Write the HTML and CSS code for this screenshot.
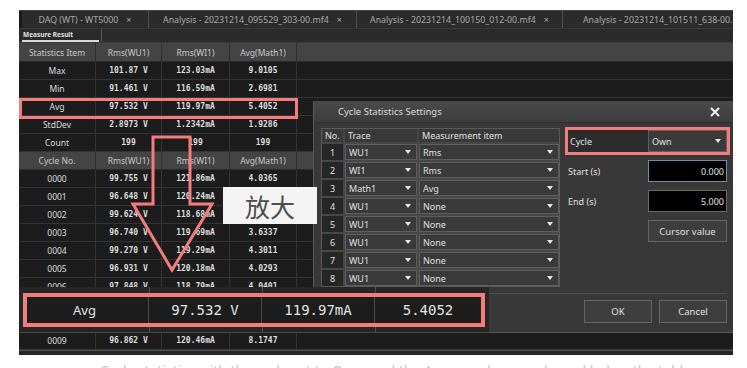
FILE: index.html
```html
<!DOCTYPE html>
<html lang="en">
<head>
    <meta charset="UTF-8">
    <title>Cycle Statistics Settings</title>
    <link rel="stylesheet" href="styles.css">
</head>
<body>
    <div class="app">
        <!-- document tabs -->
        <div class="tabs">
            <div class="tab t1">DAQ (WT) - WT5000 <span class="x">×</span></div>
            <div class="tab t2">Analysis - 20231214_095529_303-00.mf4 <span class="x">×</span></div>
            <div class="tab t3">Analysis - 20231214_100150_012-00.mf4 <span class="x">×</span></div>
            <div class="tab t4">Analysis - 20231214_101511_638-00.mf4 <span class="x">×</span></div>
        </div>

        <div class="subtabs">
            <div class="subtab">Measure Result</div>
        </div>

        <!-- result table -->
        <div class="grid">
            <div class="row head"><div>Statistics Item</div><div>Rms(WU1)</div><div>Rms(WI1)</div><div>Avg(Math1)</div><div></div></div>
            <div class="row"><div>Max</div><div class="num">101.87 V</div><div class="num">123.03mA</div><div class="num">9.0105</div><div></div></div>
            <div class="row"><div>Min</div><div class="num">91.461 V</div><div class="num">116.59mA</div><div class="num">2.6981</div><div></div></div>
            <div class="row"><div>Avg</div><div class="num">97.532 V</div><div class="num">119.97mA</div><div class="num">5.4052</div><div></div></div>
            <div class="row"><div>StdDev</div><div class="num">2.8973 V</div><div class="num">1.2342mA</div><div class="num">1.9286</div><div></div></div>
            <div class="row"><div>Count</div><div class="num">199</div><div class="num">199</div><div class="num">199</div><div></div></div>
            <div class="row head short"><div>Cycle No.</div><div>Rms(WU1)</div><div>Rms(WI1)</div><div>Avg(Math1)</div><div></div></div>
            <div class="row"><div>0000</div><div class="num">99.755 V</div><div class="num">121.86mA</div><div class="num">4.0365</div><div></div></div>
            <div class="row"><div>0001</div><div class="num">96.648 V</div><div class="num">120.24mA</div><div class="num">4.2217</div><div></div></div>
            <div class="row"><div>0002</div><div class="num">99.624 V</div><div class="num">118.68mA</div><div class="num">3.9874</div><div></div></div>
            <div class="row"><div>0003</div><div class="num">96.740 V</div><div class="num">119.69mA</div><div class="num">3.6337</div><div></div></div>
            <div class="row"><div>0004</div><div class="num">99.270 V</div><div class="num">119.29mA</div><div class="num">4.3011</div><div></div></div>
            <div class="row"><div>0005</div><div class="num">96.931 V</div><div class="num">120.18mA</div><div class="num">4.0293</div><div></div></div>
            <div class="row"><div>0006</div><div class="num">97.848 V</div><div class="num">118.79mA</div><div class="num">4.0401</div><div></div></div>
            <div class="row"><div>0007</div><div class="num">98.113 V</div><div class="num">119.52mA</div><div class="num">5.1206</div><div></div></div>
            <div class="row"><div>0008</div><div class="num">97.405 V</div><div class="num">120.07mA</div><div class="num">6.3318</div><div></div></div>
            <div class="row"><div>0009</div><div class="num">96.862 V</div><div class="num">120.46mA</div><div class="num">8.1747</div><div></div></div>
            <div class="grid-foot"></div>
        </div>

        <!-- dialog -->
        <div class="dialog">
            <div class="dlg-title">
                <span>Cycle Statistics Settings</span>
                <svg class="close" width="10" height="10" viewBox="0 0 10 10">
                    <path d="M1 1 L9 9 M9 1 L1 9" stroke="#f2f2f2" stroke-width="2"/>
                </svg>
            </div>
            <div class="dlg-body">
                <div class="trace-table">
                    <div class="th">No.</div><div class="th">Trace</div><div class="th">Measurement item</div>
                    <div class="no">1</div><div class="sel">WU1<span class="caret"></span></div><div class="sel">Rms<span class="caret"></span></div>
                    <div class="no">2</div><div class="sel">WI1<span class="caret"></span></div><div class="sel">Rms<span class="caret"></span></div>
                    <div class="no">3</div><div class="sel">Math1<span class="caret"></span></div><div class="sel">Avg<span class="caret"></span></div>
                    <div class="no">4</div><div class="sel">WU1<span class="caret"></span></div><div class="sel">None<span class="caret"></span></div>
                    <div class="no">5</div><div class="sel">WU1<span class="caret"></span></div><div class="sel">None<span class="caret"></span></div>
                    <div class="no">6</div><div class="sel">WU1<span class="caret"></span></div><div class="sel">None<span class="caret"></span></div>
                    <div class="no">7</div><div class="sel">WU1<span class="caret"></span></div><div class="sel">None<span class="caret"></span></div>
                    <div class="no">8</div><div class="sel">WU1<span class="caret"></span></div><div class="sel">None<span class="caret"></span></div>
                </div>
                <div class="side">
                    <div class="cycle-box">
                        <div class="cycle-lbl">Cycle</div>
                        <div class="sel cycle-sel">Own<span class="caret"></span></div>
                    </div>
                    <div class="field">
                        <span class="flabel">Start (s)</span>
                        <span class="finput focus">0.000</span>
                    </div>
                    <div class="field">
                        <span class="flabel">End (s)</span>
                        <span class="finput">5.000</span>
                    </div>
                    <div class="btn cursor-btn">Cursor value</div>
                </div>
            </div>
            <div class="dlg-foot">
                <div class="btn">OK</div>
                <div class="btn">Cancel</div>
            </div>
        </div>

        <!-- highlight on the Avg row -->
        <div class="avg-mark"></div>

        <!-- arrow and label -->
        <svg class="arrow" width="90" height="140" viewBox="0 0 90 140">
            <path d="M24 2 L61 2 L61 69 L83 69 L43 135 L4 69 L24 69 Z" fill="none" stroke="#f47c7c" stroke-width="3" stroke-linejoin="miter"/>
        </svg>
        <div class="zoom-label">放大</div>

        <!-- enlarged Avg row -->
        <div class="zoom-panel">
            <div class="zbar">
                <div class="zcell">Avg</div>
                <div class="zcell num">97.532 V</div>
                <div class="zcell num">119.97mA</div>
                <div class="zcell num">5.4052</div>
            </div>
        </div>
    </div>

    <p class="caption">Cycle statistics with the cycle set to Own, and the Avg row shown enlarged below the table</p>
</body>
</html>
```

FILE: styles.css
```css
body {
    margin: 0;
    background-color: #ffffff;
    font-family: "Noto Sans", "Open Sans", sans-serif;
    overflow: hidden;
}

.app {
    position: relative;
    width: 714px;
    height: 345px;
    margin: 10px 0 0 19px;
    background-color: #1c1c1c;
    overflow: hidden;
}

/* tabs */
.tabs {
    display: flex;
    height: 19px;
    background-color: #2b2b2b;
    border-top: 1px solid #474747;
    border-bottom: 1px solid #3a3a3a;
    box-sizing: border-box;
}

.tab {
    display: flex;
    align-items: center;
    justify-content: center;
    gap: 8px;
    color: #a9a9a9;
    font-size: 8.8px;
    white-space: nowrap;
    border-right: 1px solid #505050;
    box-sizing: border-box;
    overflow: hidden;
}

.tab .x {
    font-size: 9px;
}

.t1 {
    width: 130px;
    border-left: 3px solid #1a1a1a;
}

.t2 {
    width: 208px;
}

.t3 {
    width: 206px;
}

.t4 {
    flex: 1;
    justify-content: flex-start;
    padding-left: 20px;
    border-right: none;
}

.subtabs {
    display: flex;
    height: 14px;
    background-color: #2a2a2a;
    border-bottom: 1px solid #3c3c3c;
    box-sizing: border-box;
}

.subtab {
    width: 77px;
    margin-left: 3px;
    padding-left: 1px;
    font-size: 6.5px;
    font-weight: bold;
    color: #e2e2e2;
    line-height: 11px;
    border-bottom: 2px solid #d9d9d9;
    box-sizing: border-box;
}

.subtabs::after {
    content: "";
    width: 1px;
    margin-left: 2px;
    background-color: #5a5a5a;
}

/* result grid */
.row {
    display: grid;
    grid-template-columns: 77px 66px 68px 67px 1fr;
    height: 18px;
    border-bottom: 1px solid #343434;
    box-sizing: border-box;
}

.row > div {
    display: flex;
    align-items: center;
    justify-content: center;
    color: #dcdcdc;
    font-size: 8.5px;
    border-right: 1px solid #343434;
}

.row > div:last-child {
    border-right: none;
}

.head {
    height: 19px;
    background-color: #444444;
    border-bottom-color: #2c2c2c;
}

.head.short {
    height: 18px;
}

.head > div {
    color: #c9c9c9;
    border-right-color: #2e2e2e;
}

.num {
    font-family: "DejaVu Sans Mono", "Liberation Mono", monospace;
    font-weight: bold;
}

.row > .num {
    font-size: 8px;
}

.grid-foot {
    height: 4px;
    border-top: 1px solid #505050;
    background-color: #262626;
}

/* annotations */
.avg-mark {
    position: absolute;
    left: 0;
    top: 88px;
    width: 279px;
    height: 21px;
    border: 3px solid #f47c7c;
    box-sizing: border-box;
}

.arrow {
    position: absolute;
    left: 110px;
    top: 125px;
}

.zoom-label {
    position: absolute;
    left: 204px;
    top: 177px;
    width: 94px;
    height: 37px;
    display: flex;
    align-items: center;
    justify-content: center;
    background-color: #f4f4f4;
    color: #4d4d4d;
    font-family: "Noto Sans CJK SC", sans-serif;
    font-size: 25px;
}

.zoom-panel {
    position: absolute;
    left: 0;
    top: 277px;
    width: 470px;
    height: 46px;
    padding: 6px 0 0 4px;
    box-sizing: border-box;
    background-color: #262626;
    background-image:
        linear-gradient(#505050, #505050),
        linear-gradient(#505050, #505050),
        linear-gradient(#505050, #505050);
    background-size: 1px 100%;
    background-position: 130px 0, 243px 0, 356px 0;
    background-repeat: no-repeat;
    border-bottom: 1px solid #474747;
}

.zbar {
    display: grid;
    grid-template-columns: 122px 113px 113px 1fr;
    width: 462px;
    height: 34px;
    border: 4px solid #f47c7c;
    box-sizing: border-box;
    background-color: #1d1d1d;
}

.zcell {
    display: flex;
    align-items: center;
    justify-content: center;
    color: #e4e4e4;
    font-size: 13px;
    border-right: 1px solid #4a4a4a;
}

.zcell:first-child {
    padding-right: 6px;
}

.zcell:last-child {
    border-right: none;
}

.zcell.num {
    font-size: 14px;
    font-weight: normal;
}

/* dialog */
.dialog {
    position: absolute;
    left: 294px;
    top: 91px;
    width: 420px;
    height: 232px;
    display: flex;
    flex-direction: column;
    background-color: #383838;
    border-left: 1px solid #5a5a5a;
    border-bottom: 1px solid #555555;
    box-sizing: border-box;
    color: #e0e0e0;
    font-size: 9px;
}

.dlg-title {
    display: flex;
    align-items: center;
    justify-content: space-between;
    height: 22px;
    padding: 0 13px 0 24px;
    background: linear-gradient(#4a4a4a, #3d3d3d);
    border-bottom: 1px solid #303030;
    box-sizing: border-box;
    font-size: 9.5px;
    color: #dcdcdc;
}

.dlg-body {
    display: flex;
    gap: 5px;
    padding: 5px 3px 0 7px;
}

.trace-table {
    display: grid;
    grid-template-columns: 21px 72px 1fr;
    grid-template-rows: 13px repeat(8, 16px);
    gap: 2px;
    width: 239px;
    border: 1px solid #5a5a5a;
    background-color: #474747;
    box-sizing: border-box;
}

.th {
    display: flex;
    align-items: center;
    padding-left: 3px;
    background-color: #393939;
    font-size: 9px;
}

.no {
    display: flex;
    align-items: center;
    justify-content: center;
    background-color: #262626;
}

.sel {
    display: flex;
    align-items: center;
    justify-content: space-between;
    padding: 0 5px 0 3px;
    background-color: #3a3a3a;
    border: 1px solid #5f5f5f;
    box-sizing: border-box;
}

.caret {
    width: 0;
    height: 0;
    border-left: 3.5px solid transparent;
    border-right: 3.5px solid transparent;
    border-top: 4px solid #e8e8e8;
}

.side {
    width: 165px;
    margin-top: -1px;
}

.cycle-box {
    display: flex;
    height: 28px;
    border: 3px solid #f47c7c;
    box-sizing: border-box;
}

.cycle-lbl {
    width: 80px;
    display: flex;
    align-items: center;
    padding-left: 2px;
    background-color: #2c2c2c;
    box-sizing: border-box;
}

.cycle-sel {
    flex: 1;
}

.field {
    display: flex;
    align-items: center;
    height: 22px;
    margin-top: 8px;
}

.cycle-box + .field {
    margin-top: 5px;
}

.flabel {
    width: 83px;
    padding-left: 3px;
    box-sizing: border-box;
}

.finput {
    width: 79px;
    height: 22px;
    display: flex;
    align-items: center;
    justify-content: flex-end;
    padding-right: 2px;
    background-color: #000000;
    border: 1px solid #6a6a6a;
    box-sizing: border-box;
}

.finput.focus {
    border-color: #6c8fae;
}

.btn {
    display: flex;
    align-items: center;
    justify-content: center;
    width: 68px;
    height: 23px;
    background-color: #3e3e3e;
    border: 1px solid #666666;
    box-sizing: border-box;
    font-size: 9.5px;
}

.cursor-btn {
    width: 79px;
    height: 22px;
    margin: 8px 0 0 83px;
}

.dlg-foot {
    display: flex;
    justify-content: flex-end;
    gap: 7px;
    margin: auto 6px 0 7px;
    padding: 6px 0 9px;
    border-top: 1px solid #4e4e4e;
}

.caption {
    margin: 9px 0 0 100px;
    font-size: 14px;
    line-height: 14px;
    color: #c4c4c4;
    white-space: nowrap;
}
```
